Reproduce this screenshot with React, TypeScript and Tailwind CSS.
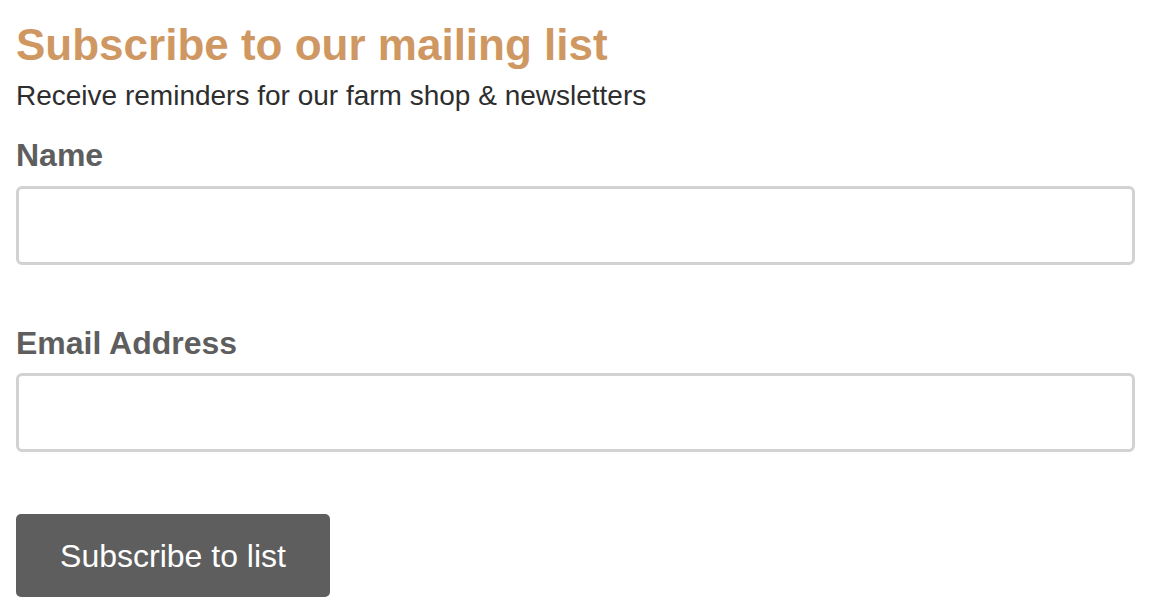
export default function App() {
  return (
    <div
      className="min-h-screen bg-white pl-4 pr-[21px] pt-[19px]"
      style={{ fontFamily: '"Liberation Sans", Arial, Helvetica, sans-serif' }}
    >
      <h1 className="text-[44px] leading-[52px] font-bold text-[#cf9862]">
        Subscribe to our mailing list
      </h1>
      <p className="mt-2 text-[28px] leading-[34px] text-[#2e2e2e]">
        Receive reminders for our farm shop &amp; newsletters
      </p>

      <form className="mt-[23px]" onSubmit={e => e.preventDefault()}>
        <label className="block text-[32px] leading-[38px] font-bold text-[#5e5e5e]">Name</label>
        <input
          type="text"
          className="mt-[12px] block h-[79px] w-full rounded-[6px] border-[3px] border-[#d2d2d2] bg-white outline-none"
        />

        <label className="mt-[59px] block text-[32px] leading-[38px] font-bold text-[#5e5e5e]">Email Address</label>
        <input
          type="email"
          className="mt-[11px] block h-[79px] w-full rounded-[6px] border-[3px] border-[#d2d2d2] bg-white outline-none"
        />

        <button
          type="submit"
          className="mt-[62px] block h-[83px] w-[314px] rounded-[5px] bg-[#5e5e5e] text-[32px] text-white"
        >
          Subscribe to list
        </button>
      </form>
    </div>
  );
}
